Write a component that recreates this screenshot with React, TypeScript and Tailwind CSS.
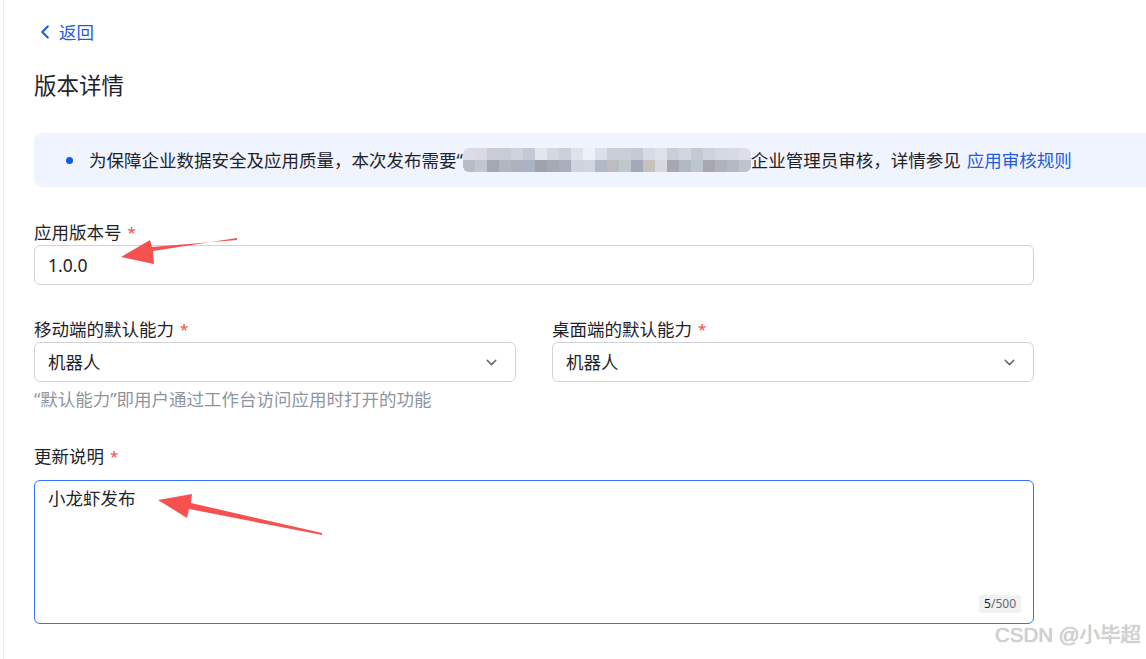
import { ChevronDown, ChevronLeft } from "lucide-react";

const font = { fontFamily: '"Noto Sans", "Noto Sans CJK SC", sans-serif' };

// mosaic cells for the blurred company name
const topRow = ["#dcdbe6", "#d9dae3", "#c9ccd6", "#c6ccd8", "#ced3de", "#c3c9d8", "#e4e6ee", "#d6d8e0", "#cdd0dc", "#e0e2ea", "#eef1fa", "#dde0ea", "#cbced9", "#cbcdd8", "#c6c8d3", "#d9dbe4", "#e0e2ea", "#cbced8", "#d3d6df", "#c5c9d4", "#cfd2dd", "#d5d8e3", "#d7dae4", "#dcdde7"];
const bottomRow = ["#b9bcc7", "#c2c6d0", "#a6a8b0", "#b1b7c1", "#adb1bb", "#aab3c3", "#9fa1ab", "#a6a8b2", "#a8aebb", "#cfd3dd", "#d0d5e2", "#b3b9c4", "#bdbcc2", "#c1c8c9", "#a4a9b9", "#c7c1be", "#d8d9de", "#a5a7b1", "#b1b9c2", "#bcc6cf", "#a7a8ae", "#b0b2bd", "#b6b9c4", "#bfc3ce"];

function Label({ text }: { text: string }) {
  return (
    <div className="flex h-6 items-center text-[17.5px] leading-6 text-[#1f2329]">
      {text}
      <span className="ml-[6px] text-[15px] text-[#f54a45]">*</span>
    </div>
  );
}

function SelectBox({ value }: { value: string }) {
  return (
    <div className="mt-px flex h-10 items-center justify-between rounded-[6px] border border-[#d0d3d6] bg-white pl-[13px] pr-[15px] text-[17.5px] text-[#1f2329]">
      <span>{value}</span>
      <ChevronDown size={17} strokeWidth={2} className="text-[#646a73]" />
    </div>
  );
}

export default function App() {
  return (
    <div className="relative h-[659px] w-[1146px] overflow-hidden bg-white" style={font}>
      <div className="ml-[3px] h-full border-l border-[#e8e9eb] pl-[30px] pt-5">
        <button className="flex h-6 items-center gap-[3px] text-[17.5px] text-[#245bdb]">
          <ChevronLeft size={22} strokeWidth={2.4} />
          <span>返回</span>
        </button>

        <h1 className="mt-[27px] h-[30px] text-[22.5px] leading-[30px] text-[#1f2329]">版本详情</h1>

        <div className="mt-8 flex h-[54px] w-[1140px] items-center rounded-[8px] bg-[#f0f4ff] pl-[32px] text-[17.5px] text-[#1f2329]">
          <span className="mr-[16px] h-[7px] w-[7px] rounded-full bg-[#1456f0]" />
          <span>为保障企业数据安全及应用质量，本次发布需要“</span>
          <span className="flex flex-col overflow-hidden rounded-[6px]">
            <span className="flex">
              {topRow.map((c, i) => (
                <span key={i} className="h-3 w-3" style={{ background: c }} />
              ))}
            </span>
            <span className="flex">
              {bottomRow.map((c, i) => (
                <span key={i} className="h-3 w-3" style={{ background: c }} />
              ))}
            </span>
          </span>
          <span>企业管理员审核，详情参见</span>
          <span className="ml-[6px] text-[#245bdb]">应用审核规则</span>
        </div>

        <div className="w-[1000px]">
          <div className="mt-[33px]">
            <Label text="应用版本号" />
            <div className="mt-px flex h-10 items-center rounded-[6px] border border-[#d0d3d6] pl-[13px] text-[17.5px] text-[#1f2329]">
              1.0.0
            </div>
          </div>

          <div className="mt-8 grid grid-cols-2 gap-x-9">
            <div>
              <Label text="移动端的默认能力" />
              <SelectBox value="机器人" />
            </div>
            <div>
              <Label text="桌面端的默认能力" />
              <SelectBox value="机器人" />
            </div>
          </div>
          <p className="mt-[5px] h-6 text-[17.5px] leading-6 text-[#8f959e]">“默认能力”即用户通过工作台访问应用时打开的功能</p>

          <div className="mt-[33px]">
            <Label text="更新说明" />
            <div className="relative mt-3 h-[144px] rounded-[6px] border border-[#3370ff] px-[13px] pt-[5px] text-[17.5px] leading-6 text-[#1f2329]">
              小龙虾发布
              <span className="absolute bottom-[10px] right-[12px] rounded-[4px] bg-[#f0f1f3] px-[5px] text-[12px] leading-[18px] text-[#646a73]">
                <span className="text-[#1f2329]">5</span>/500
              </span>
            </div>
          </div>
        </div>
      </div>

      {/* annotation arrows */}
      <svg className="pointer-events-none absolute left-0 top-0" width="1146" height="659">
        <polygon points="237,238 153,251 154,264 121,257 150,240 152,247 237,240" fill="#f55151" />
        <polygon points="322,535 189,509 187,518 158,500 192,494 191,503 322,533" fill="#f55151" />
      </svg>

      <div className="absolute bottom-[8px] right-[5px] text-[20.5px] text-[#d2d2d2] [text-shadow:0_0_1px_#b0b0b0]" style={{ fontFamily: '"Liberation Sans", "Noto Sans CJK SC", sans-serif' }}>
        CSDN @小毕超
      </div>
    </div>
  );
}
